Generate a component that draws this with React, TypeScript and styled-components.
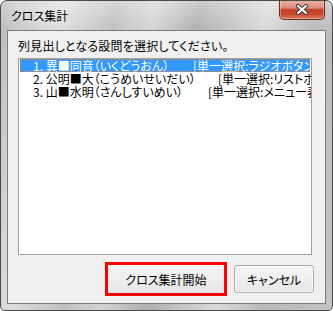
import React from 'react';
import styled, { createGlobalStyle } from 'styled-components';

const Global = createGlobalStyle`
  html, body { margin: 0; padding: 0; background: #ffffff; }
  body {
    font-family: "Noto Sans CJK JP", "Noto Sans", sans-serif;
    font-size: 12px;
    font-feature-settings: "palt";
  }
`;

const Window = styled.div`
  width: 333px;
  height: 311px;
  box-sizing: border-box;
  border: 1px solid #4a4a4a;
  border-radius: 7px 7px 5px 5px;
  padding: 0 6px 6px;
  display: flex;
  flex-direction: column;
  overflow: hidden;
  background:
    linear-gradient(to bottom, rgba(255,255,255,0.35), rgba(255,255,255,0) 30px) no-repeat,
    linear-gradient(100deg, #bababa 0%, #d2d2d2 10%, #dddddd 17%, #c0c0c0 30%, #d4d4d4 40%, #b0b0b0 52%, #c7c7c7 62%, #dadada 70%, #bababa 82%, #c3c3c3 100%);
`;

const TitleBar = styled.div`
  height: 29px;
  flex: none;
  display: flex;
  align-items: flex-start;
  justify-content: space-between;
  padding-left: 4px;
`;

const Title = styled.div`
  margin-top: 8px;
  font-size: 12px;
  line-height: 14px;
  color: #000;
  text-shadow: 0 0 6px rgba(255,255,255,0.9);
`;

const CloseButton = styled.div`
  width: 46px;
  height: 20px;
  box-sizing: border-box;
  margin-right: 1px;
  margin-top: -1px;
  border: 1px solid #6b2a20;
  border-top: none;
  border-radius: 0 0 5px 5px;
  background: linear-gradient(to bottom, #eab1a5 0%, #de8e7e 40%, #c3412c 52%, #c9472f 75%, #df7c62 100%);
  box-shadow: inset 0 0 0 1px rgba(255,255,255,0.35);
  display: flex;
  align-items: center;
  justify-content: center;
`;

const Client = styled.div`
  flex: 1;
  border: 1px solid #7c7c7c;
  background: #f0f0f0;
  padding: 8px 11px 0 10px;
  display: flex;
  flex-direction: column;
`;

const Prompt = styled.div`
  font-size: 12px;
  line-height: 13px;
  color: #000;
  letter-spacing: 0.2px;
`;

const ListBox = styled.div`
  margin-top: 6px;
  width: 294px;
  height: 197px;
  box-sizing: border-box;
  border: 1px solid #a0a0a0;
  background: #ffffff;
  overflow: hidden;
  display: flex;
  flex-direction: column;
  padding: 0 1px;
`;

const Row = styled.div<{ $selected?: boolean }>`
  height: 13px;
  flex: none;
  display: flex;
  align-items: center;
  white-space: pre;
  padding-left: 13px;
  font-size: 12px;
  line-height: 13px;
  color: ${p => (p.$selected ? '#ffffff' : '#000000')};
  background: ${p => (p.$selected ? '#3399ff' : 'transparent')};
  outline: ${p => (p.$selected ? '1px dotted #d9823a' : 'none')};
  outline-offset: -1px;
`;

const ItemLabel = styled.span<{ $w: number }>`
  display: inline-block;
  width: ${p => p.$w}px;
  flex: none;
  overflow: hidden;
`;

const ItemType = styled.span`
  flex: none;
`;

const ButtonRow = styled.div`
  margin-top: 7px;
  height: 34px;
  display: flex;
  justify-content: flex-end;
  align-items: center;
  gap: 7px;
`;

const Button = styled.div<{ $w: number; $marked?: boolean }>`
  width: ${p => p.$w}px;
  height: ${p => (p.$marked ? 34 : 28)}px;
  box-sizing: border-box;
  border: ${p => (p.$marked ? '3px solid #ff0000' : '1px solid #acacac')};
  border-radius: ${p => (p.$marked ? '0' : '3px')};
  background: linear-gradient(to bottom, #f4f4f4 0%, #eeeeee 50%, #e6e6e6 100%);
  box-shadow: ${p => (p.$marked ? 'none' : 'inset 0 0 0 1px #fafafa')};
  display: flex;
  align-items: center;
  justify-content: center;
  font-size: 12px;
  color: #000;
`;

const items = [
  { label: '1. 異■同音（いくどうおん）', type: '[単一選択:ラジオボタン]', w: 160, selected: true },
  { label: '2. 公明■大（こうめいせいだい）', type: '[単一選択:リストボックス]', w: 185, selected: false },
  { label: '3. 山■水明（さんしすいめい）', type: '[単一選択:メニュー表示]', w: 175, selected: false },
];

export default function App() {
  return (
    <>
      <Global />
      <Window>
        <TitleBar>
          <Title>クロス集計</Title>
          <CloseButton>
            <svg width="14" height="11" viewBox="0 0 14 11">
              <path d="M3 2 L11 9 M11 2 L3 9" stroke="#3a3a3a" strokeWidth="4.2" strokeLinecap="round" />
              <path d="M3 2 L11 9 M11 2 L3 9" stroke="#ffffff" strokeWidth="2.2" strokeLinecap="round" />
            </svg>
          </CloseButton>
        </TitleBar>
        <Client>
          <Prompt>列見出しとなる設問を選択してください。</Prompt>
          <ListBox>
            {items.map(it => (
              <Row key={it.label} $selected={it.selected}>
                <ItemLabel $w={it.w}>{it.label}</ItemLabel>
                <ItemType>{it.type}</ItemType>
              </Row>
            ))}
          </ListBox>
          <ButtonRow>
            <Button $w={122} $marked>クロス集計開始</Button>
            <Button $w={80}>キャンセル</Button>
          </ButtonRow>
        </Client>
      </Window>
    </>
  );
}
